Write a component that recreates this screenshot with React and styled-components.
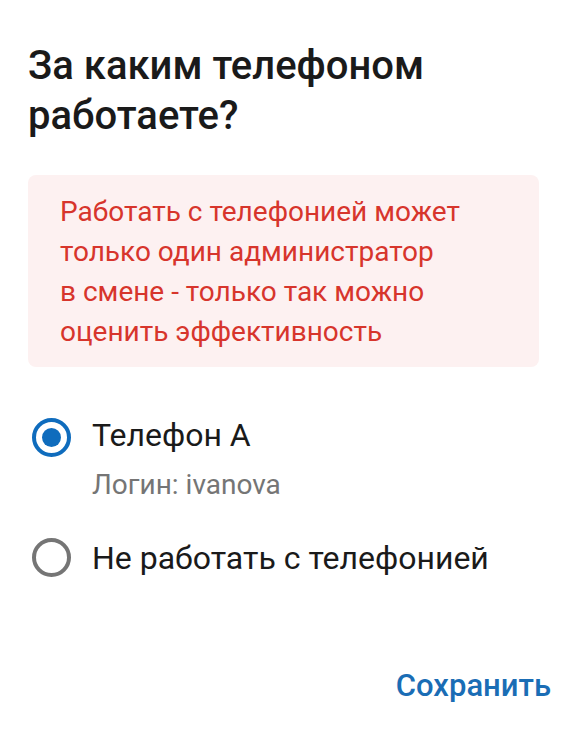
import styled, { createGlobalStyle } from "styled-components";

const Global = createGlobalStyle`
  html, body {
    margin: 0;
    background: #fff;
  }
  body {
    font-family: Roboto, "Noto Sans", sans-serif;
  }
`;

const Page = styled.div`
  width: 570px;
  height: 732px;
  box-sizing: border-box;
  padding: 41px 19px 0 28px;
  display: flex;
  flex-direction: column;
`;

const Title = styled.h1`
  margin: 0;
  font-size: 40px;
  line-height: 50px;
  font-weight: 500;
  color: #1a1a1a;
`;

const Alert = styled.div`
  margin-top: 34px;
  margin-right: 12px;
  background: #fdf1f1;
  border-radius: 8px;
  padding: 17px 20px 15px 32px;
  color: #d7352c;
  font-size: 28px;
  line-height: 40px;
`;

const Options = styled.div`
  margin-top: 48px;
  display: flex;
  flex-direction: column;
  gap: 35px;
`;

const Option = styled.label`
  display: grid;
  grid-template-columns: 64px 1fr;
  align-items: start;
  cursor: pointer;
`;

const Radio = styled.span`
  width: 39px;
  height: 39px;
  box-sizing: border-box;
  border-radius: 50%;
  border: 4px solid ${(p) => (p.checked ? "#0f6cbd" : "#757575")};
  display: flex;
  align-items: center;
  justify-content: center;
  margin: ${(p) => (p.checked ? "3px" : "0")} 0 0 4px;
  &::after {
    content: "";
    width: 19px;
    height: 19px;
    border-radius: 50%;
    background: ${(p) => (p.checked ? "#0f6cbd" : "transparent")};
  }
`;

const Label = styled.div`
  font-size: 32px;
  line-height: 40px;
  color: #1a1a1a;
`;

const Sub = styled.div`
  margin-top: 12px;
  font-size: 28px;
  line-height: 36px;
  color: #757575;
`;

const Footer = styled.div`
  margin-top: auto;
  padding-bottom: 26px;
  display: flex;
  justify-content: flex-end;
`;

const SaveButton = styled.button`
  border: 0;
  background: none;
  padding: 0;
  font-family: Roboto, sans-serif;
  font-size: 31px;
  line-height: 40px;
  font-weight: 500;
  color: #1a6db5;
  cursor: pointer;
`;

export default function App() {
  return (
    <>
      <Global />
      <Page>
        <Title>
          За каким телефоном
          <br />
          работаете?
        </Title>
        <Alert>
          Работать с телефонией может
          <br />
          только один администратор
          <br />в смене - только так можно
          <br />
          оценить эффективность
        </Alert>
        <Options>
          <Option>
            <Radio checked />
            <div>
              <Label>Телефон А</Label>
              <Sub>Логин: ivanova</Sub>
            </div>
          </Option>
          <Option>
            <Radio />
            <Label>Не работать с телефонией</Label>
          </Option>
        </Options>
        <Footer>
          <SaveButton>Сохранить</SaveButton>
        </Footer>
      </Page>
    </>
  );
}
